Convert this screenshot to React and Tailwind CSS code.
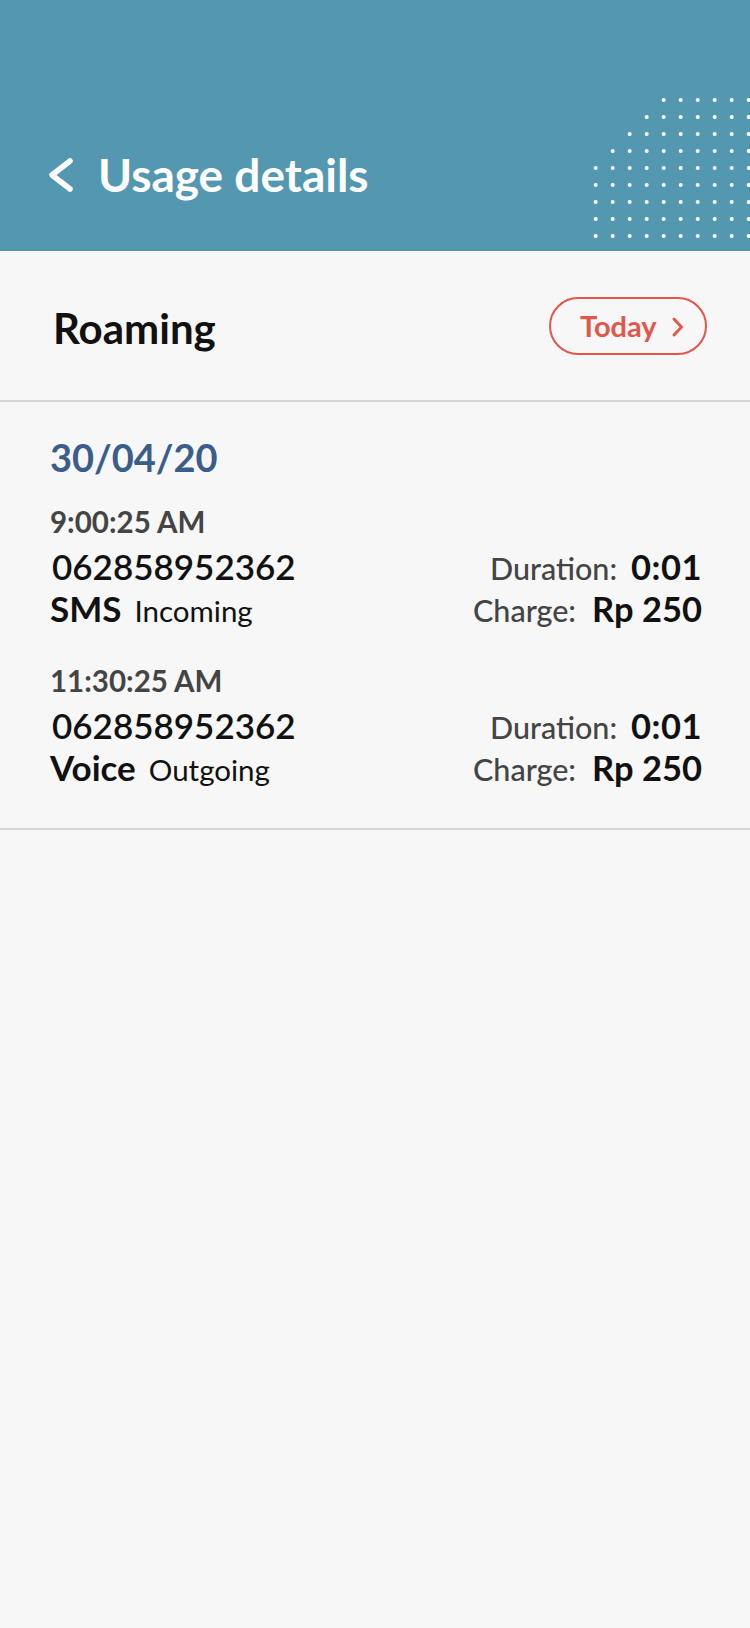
import React from "react";

function Dots() {
  const cols = [];
  const rows = [100, 117, 134, 151, 168, 185, 202, 219, 236];
  const starts = [4, 3, 2, 1, 0, 0, 0, 0, 0];
  rows.forEach((y, r) => {
    for (let c = starts[r]; c < 10; c++) {
      cols.push(<circle key={`${r}-${c}`} cx={595.7 + c * 17} cy={y} r="2" fill="#ffffff" />);
    }
  });
  return (
    <svg className="absolute top-0 left-0" width="750" height="251" viewBox="0 0 750 251">
      {cols}
    </svg>
  );
}

function Entry({ time, number, type, dir, duration, charge, className }) {
  return (
    <div className={className}>
      <div className="text-[29.5px] leading-[36px] font-bold text-[#444444]">{time}</div>
      <div className="mt-[5px]">
        <div className="flex justify-between items-baseline h-[42px] leading-[42px]">
          <span className="text-[35px] font-semibold text-[#111111] ml-[2px]">{number}</span>
          <span className="flex items-baseline">
            <span className="text-[30.5px] font-medium text-[#444444]">Duration:</span>
            <span className="text-[34.5px] font-bold text-[#111111] ml-[14px] tracking-[0.5px]">{duration}</span>
          </span>
        </div>
        <div className="flex justify-between items-baseline h-[42px] leading-[42px]">
          <span className="flex items-baseline">
            <span className="text-[35px] font-bold text-[#111111]">{type}</span>
            <span className="text-[29.5px] font-normal text-[#111111] ml-[13px]">{dir}</span>
          </span>
          <span className="flex items-baseline">
            <span className="text-[30.5px] font-medium text-[#444444]">Charge:</span>
            <span className="text-[34.5px] font-bold text-[#111111] ml-[16px]">{charge}</span>
          </span>
        </div>
      </div>
    </div>
  );
}

export default function App() {
  return (
    <div className="w-[750px] min-h-[1628px] bg-[#f7f7f7]" style={{ fontFamily: "Lato, 'Noto Sans', sans-serif" }}>
      <div className="relative h-[251px] bg-[#5398b0] overflow-hidden">
        <Dots />
        <div className="relative flex items-center pt-[152px] pl-[47px]">
          <svg width="28" height="38" viewBox="0 0 28 38" className="shrink-0">
            <path d="M23 5 L5 19 L23 33" stroke="#ffffff" strokeWidth="5.5" fill="none" strokeLinecap="round" strokeLinejoin="round" />
          </svg>
          <span className="ml-[23px] text-[46px] leading-[46px] font-bold text-white">Usage details</span>
        </div>
      </div>

      <div className="flex items-center justify-between h-[149px] pl-[53px] pr-[43px]">
        <span className="text-[42px] leading-[42px] font-bold text-[#111111] mt-[4px]">Roaming</span>
        <div className="flex items-center h-[58px] w-[158px] border-2 border-[#e2574c] rounded-full pl-[29px]">
          <span className="text-[29px] leading-[29px] font-bold text-[#e2574c]">Today</span>
          <svg width="14" height="22" viewBox="0 0 14 22" className="ml-[14px] mt-[2px]">
            <path d="M3 3 L10.5 11 L3 19" stroke="#e2574c" strokeWidth="3" fill="none" strokeLinecap="round" strokeLinejoin="round" />
          </svg>
        </div>
      </div>

      <div className="h-[2px] bg-[#d6d6d6]" />

      <div className="pl-[50px] pr-[48px] pt-[38px] pb-[40px]">
        <div className="text-[38px] leading-[35px] font-bold text-[#3b5d8c]">30/04/20</div>
        <Entry className="mt-[29px]" time="9:00:25 AM" number="062858952362" type="SMS" dir="Incoming" duration="0:01" charge="Rp 250" />
        <Entry className="mt-[34px]" time="11:30:25 AM" number="062858952362" type="Voice" dir="Outgoing" duration="0:01" charge="Rp 250" />
      </div>

      <div className="h-[2px] bg-[#d6d6d6]" />
    </div>
  );
}
